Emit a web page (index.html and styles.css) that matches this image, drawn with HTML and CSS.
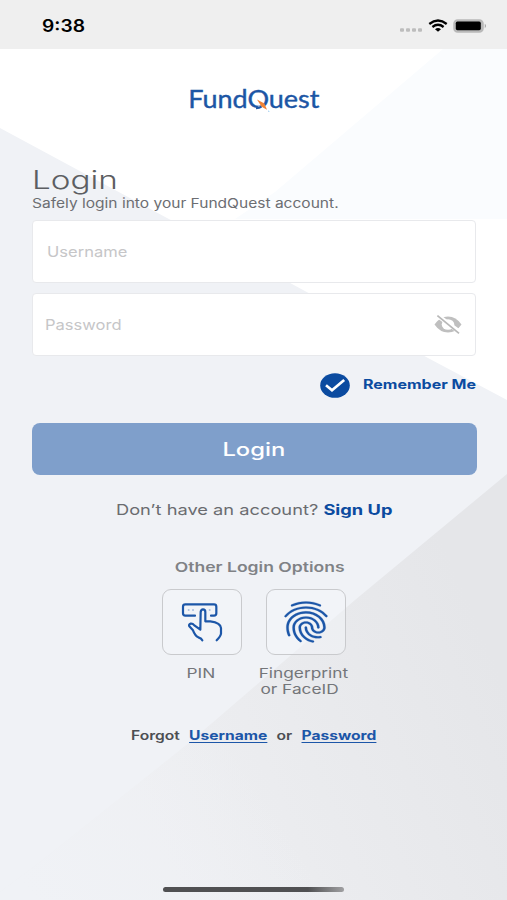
FILE: index.html
```html
<!DOCTYPE html>
<html lang="en">
<head>
    <meta charset="UTF-8">
    <title>FundQuest Login</title>
    <link rel="stylesheet" href="styles.css">
</head>
<body>
    <!-- background shapes -->
    <svg class="backdrop" viewBox="0 0 507 900" preserveAspectRatio="none">
        <defs>
            <linearGradient id="shade" gradientUnits="userSpaceOnUse" x1="160" y1="840" x2="507" y2="690">
                <stop offset="0" stop-color="#eeeff2"/>
                <stop offset="1" stop-color="#e5e6e9"/>
            </linearGradient>
            <linearGradient id="fade" gradientUnits="userSpaceOnUse" x1="20" y1="880" x2="230" y2="740">
                <stop offset="0" stop-color="#f0f2f6"/>
                <stop offset="1" stop-color="#f0f2f6" stop-opacity="0"/>
            </linearGradient>
        </defs>
        <rect width="507" height="900" fill="#f0f2f6"/>
        <path d="M0 49H507V400L428 358L292 284L167 218L0 128Z" fill="#fff"/>
        <path d="M443 49H507V219H235L275 192Z" fill="#fafcfe"/>
        <path d="M507 474L355 600L190 742L40 862L0 892V900H507Z" fill="url(#shade)"/>
        <path d="M507 474L355 600L190 742L40 862L0 892V900H507Z" fill="url(#fade)"/>
    </svg>

    <div class="status-bar">
        <span class="time">9:38</span>
        <div class="status-icons">
            <svg width="24" height="14" viewBox="0 0 24 14" fill="#bdbdbd">
                <rect x="1" y="9.2" width="4" height="3.6" rx="1"/>
                <rect x="7" y="9.2" width="4" height="3.6" rx="1"/>
                <rect x="13" y="9.2" width="4" height="3.6" rx="1"/>
                <rect x="19" y="9.2" width="4" height="3.6" rx="1"/>
            </svg>
            <svg width="20" height="14" viewBox="0 0 20 14" fill="none" stroke="#000" stroke-width="2.3">
                <path d="M1.3 5Q10 -1.9 18.7 5"/>
                <path d="M4.4 8Q10 3.6 15.6 8"/>
                <path d="M7 10.2Q10 8 13 10.2L10 12.8Z" fill="#000" stroke="none"/>
            </svg>
            <svg width="34" height="14" viewBox="0 0 34 14">
                <rect x="1" y="1" width="29" height="12" rx="3.6" fill="#b9b9b9" stroke="#b9b9b9" stroke-width="1.5"/>
                <rect x="2.8" y="2.6" width="25" height="8.6" rx="1.6" fill="#000"/>
                <path d="M31.8 4.8Q34 7 31.8 9.2Z" fill="#999"/>
            </svg>
        </div>
    </div>

    <div class="logo">
        <span class="logo-text">FundQuest</span>
        <svg class="needle" width="16" height="16" viewBox="0 0 16 16">
            <path d="M1 8.3L3 7.2L12.6 8.7V16H3L1 9.8Z" fill="#fff"/>
            <path d="M0 9.3Q3.5 9 5.5 7.6" fill="none" stroke="#1c56a5" stroke-width="2"/>
            <path d="M1 .5L8.4 4.6L11 10.8L5.6 7.8Z" fill="#f08336"/>
        </svg>
    </div>

    <div class="content">
        <h1><span class="wide">Login</span></h1>
        <p class="subtitle"><span class="wide">Safely login into your FundQuest account.</span></p>

        <div class="field username"><span class="wide">Username</span></div>
        <div class="field password">
            <span class="wide">Password</span>
            <svg width="28" height="20" viewBox="0 0 28 20">
                <path d="M.5 9.5Q6 1.5 14 1.5T27.5 9.5Q22 17.5 14 17.5T.5 9.5Z" fill="#bfbfbf"/>
                <ellipse cx="14" cy="9.5" rx="6.3" ry="5.2" fill="#fff"/>
                <path d="M2 -.6L27 18" stroke="#fff" stroke-width="4.6"/>
                <path d="M3.4 .6L25 18.4" stroke="#b8b8b8" stroke-width="1.7"/>
            </svg>
        </div>

        <div class="remember">
            <svg width="30" height="25" viewBox="0 0 30 25">
                <ellipse cx="15" cy="12.5" rx="14.8" ry="12.3" fill="#0b4ba0"/>
                <path d="M6 12.3L12 17.3L24.2 7" fill="none" stroke="#fff" stroke-width="2.7"/>
            </svg>
            <span class="wide">Remember Me</span>
        </div>

        <div class="login-button"><span class="wide">Login</span></div>

        <p class="signup">Don’t have an account? <b>Sign Up</b></p>
        <p class="other">Other Login Options</p>

        <div class="options">
            <div class="option">
                <div class="option-box">
                    <svg width="54" height="54" viewBox="0 0 162 162" fill="none" stroke="#1c56a8" stroke-width="6.6" stroke-linecap="round" stroke-linejoin="round">
                        <path d="M60 62H31Q24 62 24 55V35Q24 28 31 28H117Q124 28 124 35V55Q124 62 117 62H108"/>
                        <path d="M82 136Q80 130 70 127Q60 122 54 106L43 94Q40 88 47 86Q53 85 58 91L76 104L77 51Q78 43 84 43Q91 43 91 51V79H106Q137 83 138 99V116Q137 124 125 136"/>
                        <path d="M41 45h.1M54 45h.1M104 45h.1" stroke="#a9bfe0" stroke-width="6"/>
                    </svg>
                </div>
                <p>PIN</p>
            </div>
            <div class="option">
                <div class="option-box">
                    <svg width="44" height="42" viewBox="2.8 1.8 18.4 20.4" preserveAspectRatio="none" fill="#1c56a8" stroke="#1c56a8" stroke-width=".1">
                        <path d="M17.81 4.47c-.08 0-.16-.02-.23-.06C15.66 3.42 14 3 12.01 3c-1.98 0-3.86.47-5.57 1.41-.24.13-.54.04-.68-.2-.13-.24-.04-.55.2-.68C7.82 2.52 9.86 2 12.01 2c2.13 0 3.99.47 6.03 1.52.25.13.34.43.21.67-.09.18-.26.28-.44.28zM3.5 9.72c-.1 0-.2-.03-.29-.09-.23-.16-.28-.47-.12-.7.99-1.4 2.25-2.5 3.75-3.27C9.98 4.04 14 4.03 17.15 5.65c1.5.77 2.76 1.86 3.75 3.25.16.22.11.54-.12.7-.23.16-.54.11-.7-.12-.9-1.26-2.04-2.25-3.39-2.94-2.87-1.47-6.54-1.47-9.4.01-1.36.7-2.5 1.7-3.4 2.96-.08.14-.23.21-.39.21zm6.25 12.07c-.13 0-.26-.05-.35-.15-.87-.87-1.34-1.43-2.01-2.64-.69-1.23-1.05-2.73-1.05-4.34 0-2.97 2.54-5.39 5.66-5.39s5.66 2.42 5.66 5.39c0 .28-.22.5-.5.5s-.5-.22-.5-.5c0-2.42-2.09-4.39-4.66-4.39-2.57 0-4.66 1.97-4.66 4.39 0 1.44.32 2.77.93 3.85.64 1.15 1.08 1.64 1.85 2.42.19.2.19.51 0 .71-.11.1-.24.15-.37.15zm7.17-1.85c-1.19 0-2.24-.3-3.1-.89-1.49-1.01-2.38-2.65-2.38-4.39 0-.28.22-.5.5-.5s.5.22.5.5c0 1.41.72 2.74 1.94 3.56.71.48 1.54.71 2.54.71.24 0 .64-.03 1.04-.1.27-.05.53.13.58.41.05.27-.13.53-.41.58-.57.11-1.07.12-1.21.12zM14.91 22c-.04 0-.09-.01-.13-.02-1.59-.44-2.63-1.03-3.72-2.1-1.4-1.39-2.17-3.24-2.17-5.22 0-1.62 1.38-2.94 3.08-2.94 1.7 0 3.08 1.32 3.08 2.94 0 1.07.93 1.94 2.08 1.94s2.08-.87 2.08-1.94c0-3.77-3.25-6.83-7.25-6.83-2.84 0-5.44 1.58-6.61 4.03-.39.81-.59 1.76-.59 2.8 0 .78.07 2.01.67 3.61.1.26-.03.55-.29.64-.26.1-.55-.04-.64-.29-.49-1.31-.73-2.61-.73-3.96 0-1.2.23-2.29.68-3.24 1.33-2.79 4.28-4.6 7.51-4.6 4.55 0 8.25 3.51 8.25 7.83 0 1.62-1.38 2.94-3.08 2.94s-3.08-1.32-3.08-2.94c0-1.07-.93-1.94-2.08-1.94s-2.08.87-2.08 1.94c0 1.71.66 3.31 1.87 4.51.95.94 1.86 1.46 3.27 1.85.27.07.42.35.35.61-.05.23-.26.38-.47.38z"/>
                    </svg>
                </div>
                <p>Fingerprint<br><span class="second-line">or FaceID</span></p>
            </div>
        </div>

        <p class="forgot">
            <span>Forgot</span>
            <a>Username</a>
            <span>or</span>
            <a>Password</a>
        </p>
    </div>

    <div class="home-bar"></div>
</body>
</html>
```
FILE: styles.css
```css
* {
    box-sizing: border-box;
}

body {
    margin: 0;
    height: 900px;
    display: flex;
    flex-direction: column;
    position: relative;
    overflow: hidden;
    font-family: Inter, "Open Sans", sans-serif;
    color: #5c5e62;
    white-space: nowrap;
}

h1, p {
    margin: 0;
    font-weight: 400;
}

svg {
    display: block;
    flex: none;
}

.backdrop {
    position: absolute;
    top: 0;
    left: 0;
    width: 507px;
    height: 900px;
    z-index: -1;
}

/* letters are drawn extended */
.wide {
    display: inline-block;
    transform: scaleX(1.2);
    transform-origin: left center;
}

.status-bar {
    height: 49px;
    padding: 2px 20px 0 42px;
    display: flex;
    justify-content: space-between;
    align-items: center;
    background: #efefef;
}

.time {
    font-size: 17px;
    font-weight: 600;
    color: #000;
    transform: scaleX(1.13);
    transform-origin: left center;
}

.status-icons {
    display: flex;
    gap: 5px;
}

.logo {
    position: relative;
    height: 115px;
    padding-top: 34px;
    text-align: center;
}

.logo-text {
    display: inline-block;
    font-family: Lato, sans-serif;
    font-size: 25px;
    line-height: 30px;
    color: #1c56a5;
    -webkit-text-stroke: .4px #1c56a5;
    transform: scaleX(1.08);
}

.needle {
    position: absolute;
    left: 256px;
    top: 50px;
}

.content {
    padding: 0 31px 0 32px;
}

h1 {
    font-size: 25px;
    font-weight: 300;
    line-height: 32px;
}

h1 .wide {
    transform: scaleX(1.33);
}

.subtitle {
    font-size: 13px;
    line-height: 14px;
    color: #6c6e72;
}

.subtitle .wide {
    transform: scaleX(1.195);
}

.field {
    height: 63px;
    border: 1px solid #e8e9ec;
    border-radius: 4px;
    background: #fff;
    display: flex;
    align-items: center;
    justify-content: space-between;
    font-size: 14.5px;
    color: #c6c6c8;
}

.field .wide {
    transform: scaleX(1.14);
}

.username {
    margin-top: 10px;
    padding-left: 14px;
}

.password {
    margin-top: 10px;
    padding: 0 13px 0 12px;
}

.remember {
    height: 25px;
    margin-top: 17px;
    padding-left: 287.5px;
    display: flex;
    align-items: center;
    gap: 13px;
    font-size: 12.8px;
    font-weight: 700;
    line-height: 16px;
    color: #0b4ba0;
}

.remember .wide {
    margin-bottom: 2px;
    transform: scaleX(1.25);
}

.login-button {
    height: 52px;
    margin: 25px -.5px 0;
    padding-top: 1px;
    border-radius: 8px;
    background: #7f9fcb;
    color: #fff;
    font-size: 18px;
    font-weight: 500;
    line-height: 52px;
    text-align: center;
}

.login-button .wide {
    transform: scaleX(1.32);
    transform-origin: center;
}

.signup {
    width: fit-content;
    margin: 25px auto 0;
    font-size: 14.7px;
    line-height: 20px;
    color: #6a6c70;
    transform: scaleX(1.243);
}

.signup b {
    color: #0b4ba0;
}

.other {
    width: fit-content;
    margin: 37px auto 12px;
    padding-left: 9px;
    font-size: 13.5px;
    font-weight: 600;
    line-height: 20px;
    color: #808286;
    transform: scaleX(1.3);
}

.options {
    display: flex;
    justify-content: center;
    gap: 24px;
}

.option {
    width: 80px;
    text-align: center;
}

.option-box {
    height: 66px;
    border: 1.5px solid #c9cacd;
    border-radius: 9px;
    background: rgba(245, 248, 253, .4);
    display: flex;
    align-items: center;
    justify-content: center;
}

.option p {
    width: fit-content;
    margin: 11px auto 0;
    padding-right: 2px;
    font-size: 13.5px;
    line-height: 15.5px;
    color: #74767a;
    transform: scaleX(1.28);
}

.option:last-child p {
    padding-right: 4px;
}

/* FaceID line hangs slightly left of the first one */
.second-line {
    padding-right: 6px;
}

.forgot {
    width: fit-content;
    margin: 28px auto 0;
    height: 20px;
    display: flex;
    align-items: center;
    gap: 7.5px;
    font-size: 12.7px;
    font-weight: 600;
    color: #4c4e52;
    transform: scaleX(1.23);
}

.forgot a {
    font-weight: 700;
    color: #1c56a8;
    text-decoration: underline;
    text-underline-offset: 2px;
}

.home-bar {
    width: 181px;
    height: 5px;
    margin: auto auto 8px 163px;
    border-radius: 3px;
    background: linear-gradient(to right, #505052 80%, #a0a0a2);
}
```
